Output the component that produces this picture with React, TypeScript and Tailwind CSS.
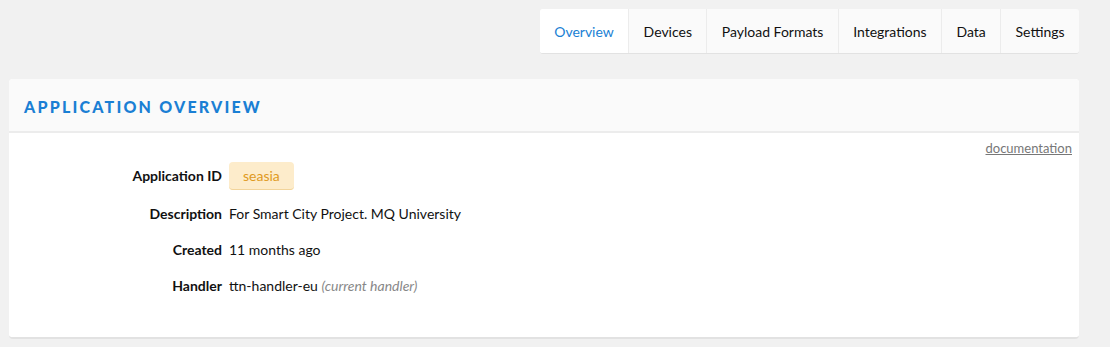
import React from "react";

const tabs = ["Overview", "Devices", "Payload Formats", "Integrations", "Data", "Settings"];

export default function App() {
  return (
    <div className="min-h-[347px] bg-[#f1f1f1] px-[9px] pt-[9px] pb-[10px] text-[14px] text-[#111]" style={{ fontFamily: "Lato, 'Open Sans', sans-serif" }}>
      <div className="flex w-[1070px] justify-end">
        <div className="flex h-[45px] overflow-hidden rounded-[3px] border-b border-[#e2e2e2] bg-[#fafafa]">
          {tabs.map((t, i) => (
            <div
              key={t}
              className={`flex items-center px-[14.4px] ${i === 0 ? "bg-white text-[#1a7fd4]" : "text-[#111]"} ${i > 0 ? "border-l border-[#ececec]" : ""}`}
            >
              {t}
            </div>
          ))}
        </div>
      </div>
      <div className="mt-[25px] w-[1070px] overflow-hidden rounded-[4px] border-b-2 border-[#e2e2e2] bg-white">
        <div className="flex h-[54px] items-center border-b-2 border-[#ececec] bg-[#fafafa] pl-[15px] pt-[4px]">
          <h2 className="text-[16px] font-black uppercase tracking-[2.2px] text-[#1a7fd4]">Application Overview</h2>
        </div>
        <div className="relative pb-[33px] pt-[6px]">
          <div className="flex justify-end pr-[7px]">
            <a className="text-[13px] text-[#777] underline">documentation</a>
          </div>
          <div className="mt-[-3px] flex flex-col">
            <Row label="Application ID" h="h-[40px]">
              <span className="rounded-[4px] border-b border-[#f2d49a] bg-[#fdeccb] px-[14px] py-[5px] text-[#e09a1e]">seasia</span>
            </Row>
            <Row label="Description">For Smart City Project. MQ University</Row>
            <Row label="Created">11 months ago</Row>
            <Row label="Handler">
              ttn-handler-eu <span className="italic text-[#888]">(current handler)</span>
            </Row>
          </div>
        </div>
      </div>
    </div>
  );
}

function Row({ label, children, h = "h-[36px]" }: { label: string; children: React.ReactNode; h?: string }) {
  return (
    <div className={`flex ${h} items-center`}>
      <div className="w-[220px] pr-[7px] text-right font-bold">{label}</div>
      <div>{children}</div>
    </div>
  );
}
